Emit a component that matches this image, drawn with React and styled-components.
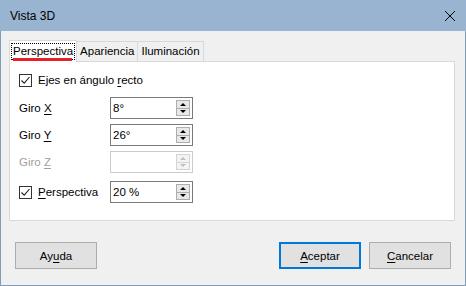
import React from "react";
import styled, { createGlobalStyle } from "styled-components";

const Global = createGlobalStyle`
  html, body { margin: 0; padding: 0; background: #f0f0f0; }
  body { font-family: "Liberation Sans", Arial, sans-serif; font-size: 11.5px; color: #000; }
`;

const Window = styled.div`
  width: 466px;
  height: 286px;
  box-sizing: border-box;
  border: 1px solid #7f9db9;
  border-top: none;
  background: #f0f0f0;
  display: flex;
  flex-direction: column;
`;

const TitleBar = styled.div`
  height: 31px;
  margin: 0 -1px;
  background: #99b4d1;
  display: flex;
  align-items: center;
  justify-content: space-between;
  padding: 0 10px 0 10px;
  font-size: 12px;
`;

const Body = styled.div`
  flex: 1;
  padding: 9px 10px 0 8px;
  display: flex;
  flex-direction: column;
`;

const Tabs = styled.div`
  display: flex;
  align-items: flex-end;
  height: 22px;
`;

const Tab = styled.div`
  position: relative;
  height: ${(p) => (p.active ? "22px" : "21px")};
  box-sizing: border-box;
  padding: 0 2px;
  display: flex;
  align-items: center;
  background: ${(p) => (p.active ? "#fff" : "#f0f0f0")};
  border: 1px solid #d9d9d9;
  border-bottom: ${(p) => (p.active ? "none" : "1px solid #d9d9d9")};
  margin-left: ${(p) => (p.first ? "0" : "-1px")};
  z-index: ${(p) => (p.active ? 2 : 1)};
`;

const TabLabel = styled.span`
  padding: 1px 1px 2px;
  outline: ${(p) => (p.focus ? "1px dotted #000" : "none")};
  outline-offset: 0;
`;

const RedLine = styled.div`
  position: absolute;
  left: 3px;
  right: 4px;
  bottom: 1px;
  height: 3px;
  background: #e8202a;
`;

const Panel = styled.div`
  height: 160px;
  box-sizing: border-box;
  background: #fff;
  border: 1px solid #d9d9d9;
  margin-top: -1px;
  padding: 9px 9px 0;
  display: flex;
  flex-direction: column;
`;

const CheckRow = styled.label`
  display: flex;
  align-items: center;
  gap: 6px;
  height: 18px;
  margin-bottom: 3px;
`;

const Box = styled.span`
  width: 13px;
  height: 13px;
  box-sizing: border-box;
  border: 1px solid #333;
  background: #fff;
  display: flex;
  align-items: center;
  justify-content: center;
`;

const FieldRow = styled.div`
  display: grid;
  grid-template-columns: 91px 83px;
  align-items: center;
  height: 22px;
  margin-top: ${(p) => p.gap || 5}px;
  color: ${(p) => (p.disabled ? "#a0a0a0" : "#000")};
`;

const LabelCheck = styled.div`
  display: flex;
  align-items: center;
  gap: 6px;
`;

const Spin = styled.div`
  height: 22px;
  box-sizing: border-box;
  border: 1px solid ${(p) => (p.disabled ? "#cccccc" : "#7a7a7a")};
  background: #fff;
  display: flex;
  align-items: center;
  justify-content: space-between;
  padding-left: 2px;
  padding-right: 2px;
`;

const SpinButtons = styled.div`
  display: flex;
  flex-direction: column;
  width: 14px;
  height: 16px;
  border: 1px solid ${(p) => (p.disabled ? "#d4d4d4" : "#adadad")};
  background: ${(p) => (p.disabled ? "#f4f4f4" : "#e8e8e8")};
  box-sizing: border-box;
`;

const Arrow = styled.div`
  flex: 1;
  display: flex;
  align-items: center;
  justify-content: center;
  border-top: ${(p) => (p.down ? "1px solid " + (p.disabled ? "#d4d4d4" : "#adadad") : "none")};
  &::after {
    content: "";
    border-left: 3px solid transparent;
    border-right: 3px solid transparent;
    ${(p) => (p.down ? "border-top" : "border-bottom")}: 3px solid ${(p) =>
      p.disabled ? "#bfbfbf" : "#000"};
  }
`;

const Footer = styled.div`
  display: flex;
  justify-content: space-between;
  padding: 21px 4px 0 6px;
`;

const Group = styled.div`
  display: flex;
  gap: 8px;
`;

const Button = styled.button`
  width: 82px;
  height: 27px;
  box-sizing: border-box;
  background: #e1e1e1;
  border: ${(p) => (p.primary ? "2px solid #0078d7" : "1px solid #adadad")};
  font-family: inherit;
  font-size: 11.5px;
  color: #000;
  padding: 0;
`;

const U = styled.span`
  text-decoration: underline;
  text-underline-offset: 2px;
`;

const Check = () => (
  <Box>
    <svg width="11" height="11" viewBox="0 0 11 11">
      <path d="M1.5 5.5 L4.2 8.2 L9.5 2" fill="none" stroke="#222" strokeWidth="1.1" />
    </svg>
  </Box>
);

const SpinBox = ({ value, disabled }) => (
  <Spin disabled={disabled}>
    <span>{value}</span>
    <SpinButtons disabled={disabled}>
      <Arrow disabled={disabled} />
      <Arrow down disabled={disabled} />
    </SpinButtons>
  </Spin>
);

export default function App() {
  return (
    <>
      <Global />
      <Window>
        <TitleBar>
          <span>Vista 3D</span>
          <svg width="12" height="12" viewBox="0 0 12 12">
            <path d="M1 1 L11 11 M11 1 L1 11" stroke="#000" strokeWidth="1" />
          </svg>
        </TitleBar>
        <Body>
          <Tabs>
            <Tab active first>
              <TabLabel focus>Perspectiva</TabLabel>
              <RedLine />
            </Tab>
            <Tab>
              <TabLabel>Apariencia</TabLabel>
            </Tab>
            <Tab>
              <TabLabel>Iluminación</TabLabel>
            </Tab>
          </Tabs>
          <Panel>
            <CheckRow>
              <Check />
              <span>
                Ejes en ángulo <U>r</U>ecto
              </span>
            </CheckRow>
            <FieldRow gap={0}>
              <span>
                Giro <U>X</U>
              </span>
              <SpinBox value="8°" />
            </FieldRow>
            <FieldRow>
              <span>
                Giro <U>Y</U>
              </span>
              <SpinBox value="26°" />
            </FieldRow>
            <FieldRow disabled>
              <span>
                Giro <U>Z</U>
              </span>
              <SpinBox value="" disabled />
            </FieldRow>
            <FieldRow gap={8}>
              <LabelCheck>
                <Check />
                <span>
                  <U>P</U>erspectiva
                </span>
              </LabelCheck>
              <SpinBox value="20 %" />
            </FieldRow>
          </Panel>
          <Footer>
            <Button>
              Ay<U>u</U>da
            </Button>
            <Group>
              <Button primary>
                <U>A</U>ceptar
              </Button>
              <Button>
                <U>C</U>ancelar
              </Button>
            </Group>
          </Footer>
        </Body>
      </Window>
    </>
  );
}
